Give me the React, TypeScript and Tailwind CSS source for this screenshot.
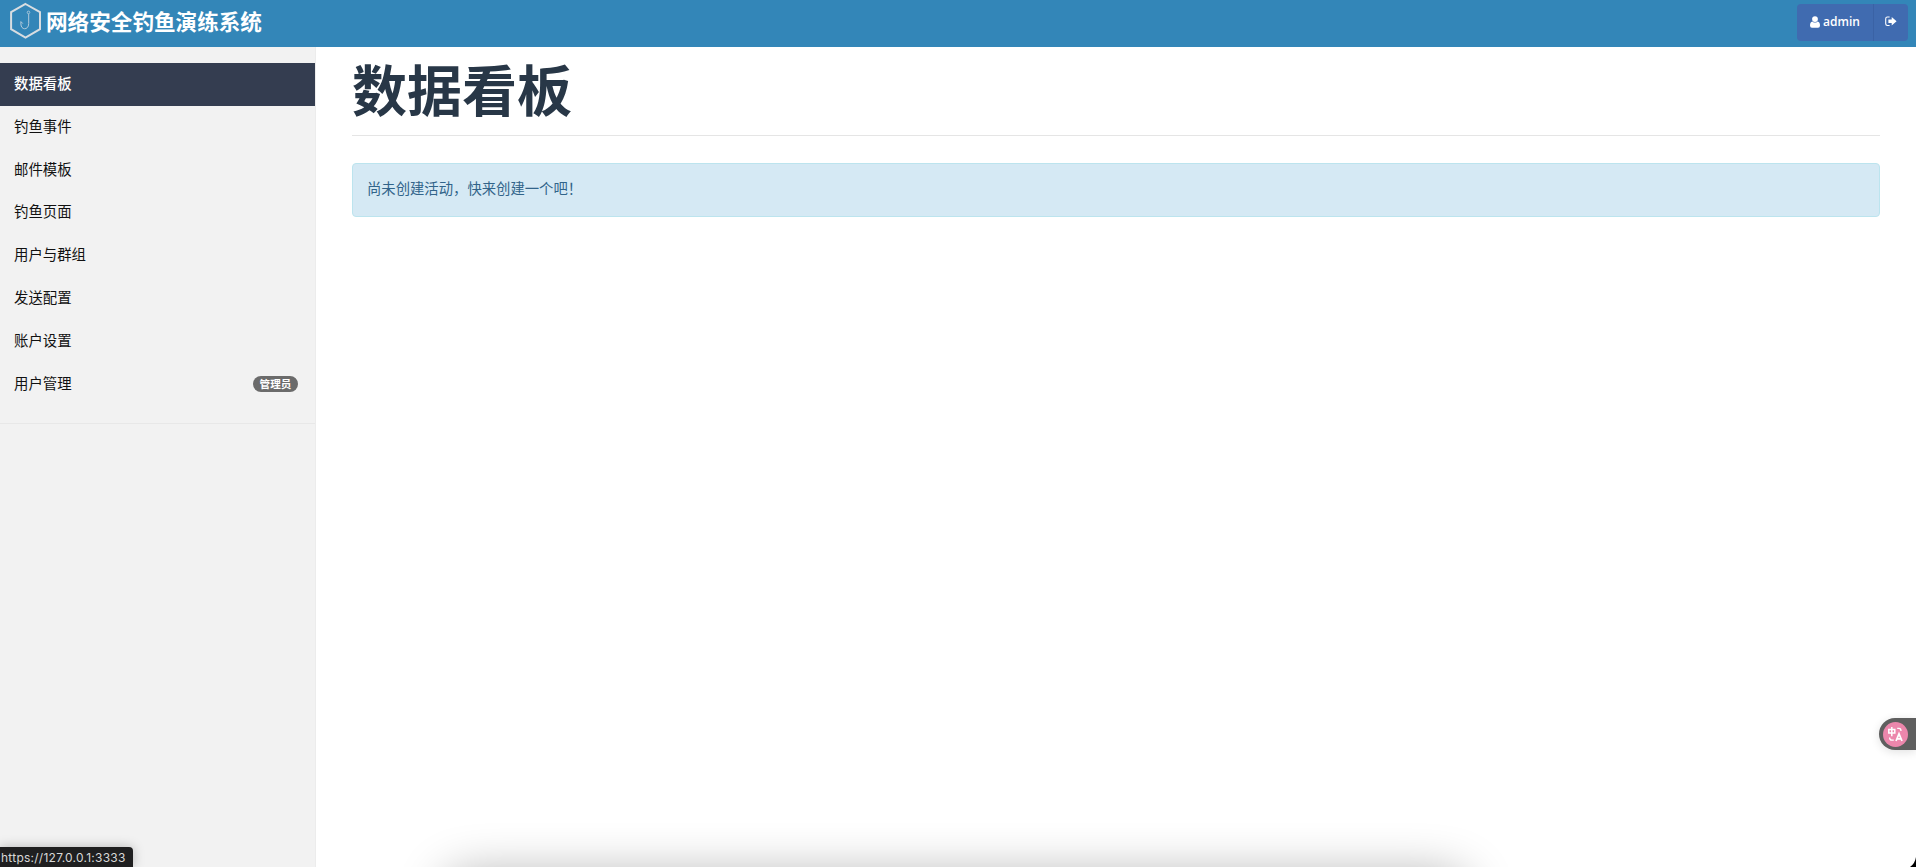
const navItems = [
  { label: "数据看板", active: true },
  { label: "钓鱼事件" },
  { label: "邮件模板" },
  { label: "钓鱼页面" },
  { label: "用户与群组" },
  { label: "发送配置" },
  { label: "账户设置" },
  { label: "用户管理", badge: "管理员" },
];

function Logo() {
  return (
    <svg width="32" height="37" viewBox="0 0 32 37" fill="none" className="shrink-0">
      <path d="M15.5 2 L30 10.2 V27.2 L15.5 35.6 L1.1 27.2 V10.2 Z" stroke="#d8dde1" strokeWidth="2" />
      <circle cx="18.5" cy="10.4" r="1.3" stroke="#b9cfdf" strokeWidth="0.8" />
      <path d="M18.7 11.8 V21.6 C18.7 28.4 10.9 28.4 10.9 22 V19.6 L12.8 21.6" stroke="#b3cbdc" strokeWidth="1" />
    </svg>
  );
}

function Header() {
  return (
    <header className="flex h-[47px] items-start justify-between bg-[#3386b8] pl-[10px] pr-2 text-white">
      <div className="flex items-start pt-[2px]">
        <Logo />
        <span className="ml-[4px] mt-[3px] text-[21.6px] leading-[32px] font-bold whitespace-nowrap">网络安全钓鱼演练系统</span>
      </div>
      <div className="mt-1 flex h-[37px] w-[111px] overflow-hidden rounded-[4px] bg-[#406bb0] font-['Open_Sans','Noto_Sans_CJK_SC',sans-serif] text-[12px] font-semibold">
        <button className="flex w-[77px] items-center justify-center gap-[3px] border-r border-[#3a62a5] pb-px">
          <svg width="10" height="12" viewBox="0 0 10 12" fill="white">
            <circle cx="5" cy="3.1" r="2.9" />
            <path d="M2.4 5.4 Q5 7.8 7.6 5.4 Q10 5.8 10 9.6 Q10 11.8 8 11.8 H2 Q0 11.8 0 9.6 Q0 5.8 2.4 5.4 Z" />
          </svg>
          admin
        </button>
        <button className="flex flex-1 items-center justify-center pb-[2px]">
          <svg width="12" height="11" viewBox="0 0 12 11" fill="none">
            <path d="M4.6 1 H2.4 Q0.7 1 0.7 2.7 V7.8 Q0.7 9.5 2.4 9.5 H4.6" stroke="white" strokeWidth="1.1" />
            <path d="M3.4 3.5 H6.7 V1 L11.6 5.3 L6.7 9.6 V7.1 H3.4 Z" fill="white" />
          </svg>
        </button>
      </div>
    </header>
  );
}

function Sidebar() {
  return (
    <aside className="w-[316px] shrink-0 border-r border-[#ececec] bg-[#f2f2f2] pt-4">
      <ul>
        {navItems.map((item) => (
          <li
            key={item.label}
            className={`flex h-[42.8px] items-center justify-between pr-[17px] pl-[14px] text-[14.4px] ${
              item.active ? "bg-[#343d50] font-medium text-white" : "text-[#111]"
            }`}
          >
            <span className="pb-[3px]">{item.label}</span>
            {item.badge && (
              <span className="flex h-4 w-[45px] items-center justify-center rounded-full bg-[#6b6b6b] text-[10.6px] leading-none font-bold text-white">
                {item.badge}
              </span>
            )}
          </li>
        ))}
      </ul>
      <hr className="mt-[17.6px] border-[#e8e8e8]" />
    </aside>
  );
}

function TranslateButton() {
  return (
    <div className="absolute top-[718px] right-0 flex h-8 w-[37px] items-center rounded-l-full bg-[#5f5f5f] pl-1 shadow-[0_2px_10px_rgba(0,0,0,0.12)]">
      <div className="flex size-[25px] items-center justify-center rounded-full bg-[#ec87ac]">
        <svg width="17" height="17" viewBox="0 0 17 17" fill="none" stroke="white">
          <path d="M1.8 3.6 H7.8 V7 H1.8 Z M4.8 1 V10.2" strokeWidth="1.5" />
          <path d="M9 15 L12 7.8 L15 15 M10 12.8 H14" strokeWidth="1.7" />
          <path d="M10.2 2.4 H12 Q14 2.4 14 5 M2.6 11.4 Q2.6 14.2 4.8 14.2 H6.8" strokeWidth="1.3" />
        </svg>
      </div>
    </div>
  );
}

export default function App() {
  return (
    <div className="relative flex h-[867px] w-[1916px] flex-col overflow-hidden bg-white font-['Noto_Sans_CJK_SC',sans-serif]">
      <Header />
      <div className="flex flex-1">
        <Sidebar />
        <main className="flex-1 pr-9 pl-9">
          <h1 className="h-[89px] border-b border-[#e5e5e5] text-[55px] leading-[80px] font-bold text-[#283747]">
            数据看板
          </h1>
          <div className="mt-[27px] flex h-[54px] items-center rounded-[4px] border border-[#bce4ee] bg-[#d5e9f4] px-[14px] pb-[4px] text-[14.35px] text-[#31648a]">
            尚未创建活动，快来创建一个吧！
          </div>
        </main>
      </div>

      <TranslateButton />

      {/* Link status bubble */}
      <div className="absolute bottom-0 left-0 flex h-5 w-[133px] items-center rounded-tr-[4px] bg-[#1f1f20] pt-[2px] pl-[1px] font-[Inter,sans-serif] text-[12px] tracking-[0.25px] whitespace-nowrap text-[#d8d8d8] shadow-[0_0_12px_rgba(0,0,0,0.25)]">
        https://127.0.0.1:3333
      </div>

      {/* Dock shadow */}
      <div className="absolute top-[875px] left-[446px] h-20 w-[1020px] rounded-[20px] shadow-[0_0_50px_rgba(0,0,0,0.33)]" />

      {/* Window corner */}
      <svg className="absolute right-0 bottom-0" width="6" height="10" viewBox="0 0 6 10">
        <path d="M6 0 Q5 6.5 0 10 H6 Z" fill="black" />
      </svg>
    </div>
  );
}
